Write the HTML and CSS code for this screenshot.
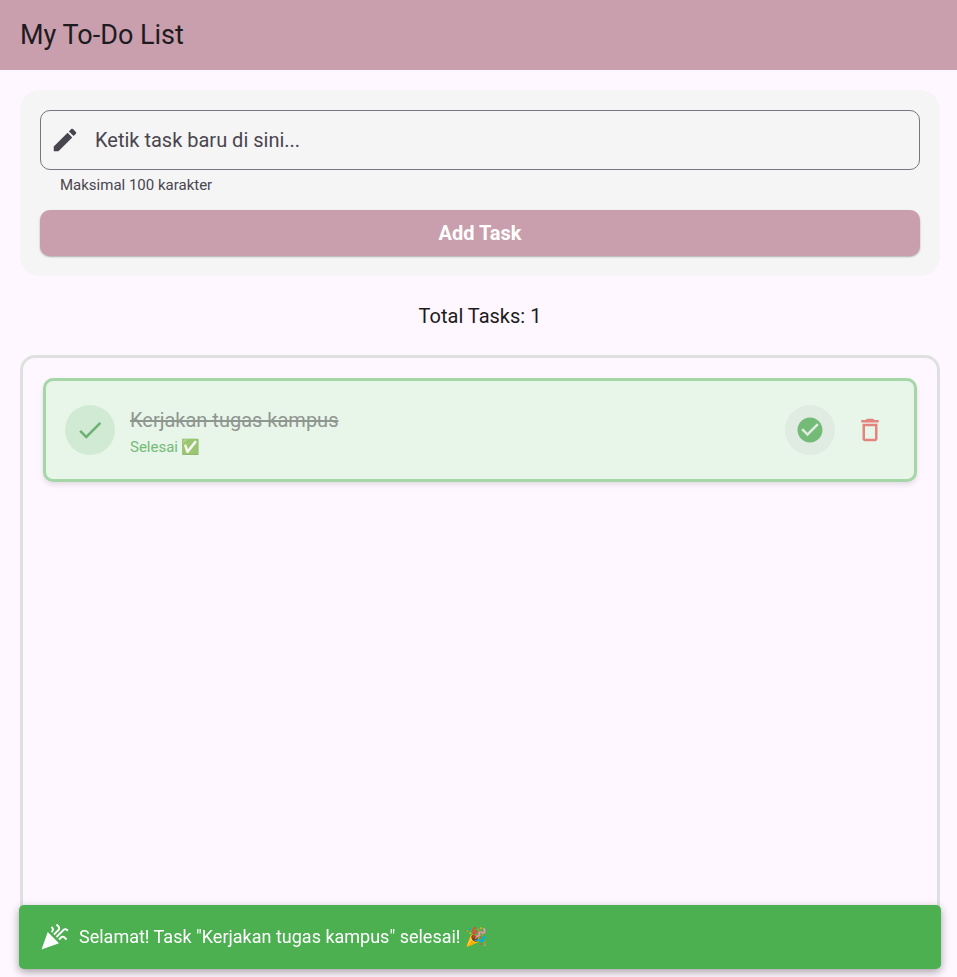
FILE: index.html
```html
<!DOCTYPE html>
<html lang="id">
<head>
<meta charset="utf-8">
<meta name="viewport" content="width=device-width, initial-scale=1">
<title>My To-Do List</title>
<link rel="stylesheet" href="styles.css">
</head>
<body>
<header class="app-bar"><h1 class="app-title">My To-Do List</h1></header>
<main class="content">
  <form class="composer">
    <label class="field">
      <svg class="icon" viewBox="0 0 24 24" aria-hidden="true"><path d="M3 17.25V21h3.75L17.81 9.94l-3.75-3.75L3 17.25zM20.71 7.04c.39-.39.39-1.02 0-1.41l-2.34-2.34a.9959.9959 0 0 0-1.41 0l-1.83 1.83 3.75 3.75 1.83-1.83z"/></svg>
      <input class="field-input" type="text" maxlength="100" placeholder="Ketik task baru di sini..." aria-label="Ketik task baru di sini..." aria-describedby="helper">
    </label>
    <p class="helper" id="helper">Maksimal 100 karakter</p>
    <button class="add-button" type="button">Add Task</button>
  </form>
  <p class="total">Total Tasks: 1</p>
  <ul class="task-list">
    <li class="task">
      <span class="circle circle-status"><svg class="icon" viewBox="0 0 24 24" aria-hidden="true"><path d="M9 16.17 4.83 12l-1.42 1.41L9 19 21 7l-1.41-1.41z"/></svg></span>
      <div class="task-text">
        <p class="task-name"><s>Kerjakan tugas kampus</s></p>
        <p class="task-state">Selesai <span class="emoji">✅</span></p>
      </div>
      <div class="actions">
        <button class="circle circle-toggle" type="button" aria-label="Selesai"><svg class="icon" viewBox="0 0 24 24" aria-hidden="true"><path d="M12 2C6.48 2 2 6.48 2 12s4.48 10 10 10 10-4.48 10-10S17.52 2 12 2zm-2 15-5-5 1.41-1.41L10 14.17l7.59-7.59L19 8l-9 9z"/></svg></button>
        <button class="circle circle-delete" type="button" aria-label="Hapus"><svg class="icon" viewBox="0 0 24 24" aria-hidden="true"><path d="M16 9v10H8V9h8m-1.5-6h-5l-1 1H5v2h14V4h-3.5l-1-1zM18 7H6v12c0 1.1.9 2 2 2h8c1.1 0 2-.9 2-2V7z"/></svg></button>
      </div>
    </li>
  </ul>
</main>
<div class="snackbar" role="status">
  <svg class="icon" viewBox="0 0 24 24" aria-hidden="true"><path d="M2 22l14-5-9-9z"/><path d="M14.53 12.53l5.59-5.59c.49-.49 1.28-.49 1.77 0l.59.59 1.06-1.06-.59-.59c-1.07-1.07-2.82-1.07-3.89 0l-5.59 5.59 1.06 1.06z"/><path d="M10.06 6.88l-.59.59 1.06 1.06.59-.59c1.07-1.07 1.07-2.82 0-3.89l-.59-.59-1.06 1.07.59.59c.48.48.48 1.28 0 1.76z"/><path d="M17.06 11.88l-1.59 1.59 1.06 1.06 1.59-1.59c.49-.49 1.28-.49 1.77 0l1.61 1.61 1.06-1.06-1.61-1.61c-1.07-1.07-2.82-1.07-3.89 0z"/><path d="M15.06 5.88l-3.59 3.59 1.06 1.06 3.59-3.59c1.07-1.07 1.07-2.82 0-3.89l-1.59-1.59-1.06 1.06 1.59 1.59c.48.49.48 1.29 0 1.77z"/></svg>
  <span>Selamat! Task "Kerjakan tugas kampus" selesai! 🎉</span>
</div>
</body>
</html>
```
FILE: styles.css
```css
* { box-sizing: border-box; }

body {
  display: flex;
  flex-direction: column;
  min-height: 100vh;
  margin: 0;
  background: #fef7ff;
  color: #1d1b20;
  font-family: Roboto, "Noto Color Emoji", sans-serif;
  font-size: 20px;
  line-height: 30px;
}

h1, p, ul { margin: 0; padding: 0; }

button, input { font: inherit; }

.icon {
  display: block;
  flex: none;
  width: 30px;
  height: 30px;
  fill: currentColor;
}

.app-bar {
  padding: 20px;
  background: #c99ead;
}

.app-title {
  font-size: 27px;
  font-weight: 400;
  line-height: 30px;
}

.content {
  display: flex;
  flex: 1;
  flex-direction: column;
  padding: 20px 17px 20px 20px;
}

.composer {
  padding: 20px;
  border-radius: 20px;
  background: #f5f5f5;
}

.field {
  display: flex;
  align-items: center;
  gap: 15px;
  height: 60px;
  padding: 0 9px;
  border: 1px solid #79747e;
  border-radius: 10px;
  color: #49454f;
}

.field-input {
  flex: 1;
  min-width: 0;
  padding: 0;
  border: 0;
  outline: 0;
  background: none;
  color: #1d1b20;
}

.field-input::placeholder { color: #49454f; opacity: 1; }

.helper {
  padding: 5px 20px 15px;
  color: #49454f;
  font-size: 15px;
  line-height: 20px;
}

.add-button {
  display: block;
  width: 100%;
  height: 46px;
  padding: 0;
  border: 0;
  border-radius: 10px;
  background: #c99ead;
  box-shadow: 0 1px 2px rgba(0, 0, 0, 0.3);
  color: #fff;
  font-weight: 700;
}

.total {
  padding: 25px 0 24px;
  text-align: center;
}

.task-list {
  flex: 1;
  padding: 20px;
  border: 3px solid #e0e0e0;
  border-radius: 15px;
  list-style: none;
}

.task {
  display: flex;
  align-items: center;
  gap: 15px;
  padding: 20px 19px;
  border: 3px solid #a5d6a7;
  border-radius: 10px;
  background: #e8f5e9;
  box-shadow: 0 3px 5px rgba(0, 0, 0, 0.1);
}

.circle {
  display: grid;
  flex: none;
  place-items: center;
  width: 50px;
  height: 50px;
  padding: 0;
  border: 0;
  border-radius: 50%;
  background: none;
}

.circle-status { background: #d1ead3; color: #6db072; }

.circle-toggle { background: #e0ebe1; color: #73bb77; }

.circle-delete { color: #e5847e; }

.task-text { flex: 1; min-width: 0; padding-top: 4px; }

.task-name { color: #8f9690; }

.task-state {
  color: #73bb77;
  font-size: 15px;
  line-height: 24px;
}

.emoji { opacity: 0.7; }

.actions { display: flex; gap: 10px; }

.snackbar {
  position: fixed;
  right: 16px;
  bottom: 8px;
  left: 19px;
  display: flex;
  align-items: center;
  gap: 10px;
  height: 64px;
  padding: 0 20px;
  border-radius: 5px;
  background: #4caf50;
  box-shadow: 0 3px 8px rgba(0, 0, 0, 0.35);
  color: #fff;
  font-size: 18px;
}
```
